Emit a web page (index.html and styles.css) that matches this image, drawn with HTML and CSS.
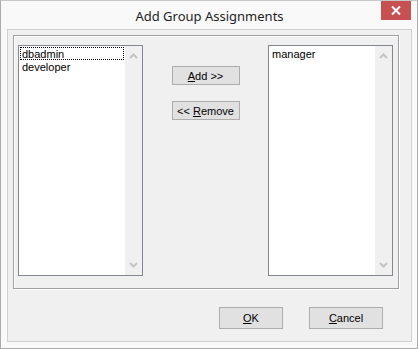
FILE: index.html
```html
<!DOCTYPE html>
<html lang="en">
<head>
<meta charset="UTF-8">
<meta name="viewport" content="width=device-width, initial-scale=1.0">
<title>Add Group Assignments</title>
<link rel="stylesheet" href="styles.css">
</head>
<body>
  <div class="window">
    <div class="titlebar">
      <span class="title">Add Group Assignments</span>
      <span class="close-btn">
        <svg class="close-x" width="30" height="19" viewBox="0 0 30 19">
          <rect width="30" height="19" fill="#c75050"/>
          <path d="M11 5.5 L19 13.5 M19 5.5 L11 13.5" stroke="#ffffff" stroke-width="2"/>
        </svg>
      </span>
    </div>

    <div class="client">
      <div class="group">
        <!-- available groups -->
        <div class="listbox">
          <div class="items">
            <div class="item focus">dbadmin</div>
            <div class="item">developer</div>
          </div>
          <div class="scrollbar">
            <svg width="9" height="6" viewBox="0 0 9 6"><path d="M1 5 L4.5 1.5 L8 5" stroke="#c4c4c4" stroke-width="2" fill="none"/></svg>
            <svg width="9" height="6" viewBox="0 0 9 6"><path d="M1 1 L4.5 4.5 L8 1" stroke="#c4c4c4" stroke-width="2" fill="none"/></svg>
          </div>
        </div>

        <div class="mover">
          <button class="btn small"><u>A</u>dd &gt;&gt;</button>
          <button class="btn small">&lt;&lt; <u>R</u>emove</button>
        </div>

        <!-- assigned groups -->
        <div class="listbox">
          <div class="items">
            <div class="item">manager</div>
          </div>
          <div class="scrollbar">
            <svg width="9" height="6" viewBox="0 0 9 6"><path d="M1 5 L4.5 1.5 L8 5" stroke="#c4c4c4" stroke-width="2" fill="none"/></svg>
            <svg width="9" height="6" viewBox="0 0 9 6"><path d="M1 1 L4.5 4.5 L8 1" stroke="#c4c4c4" stroke-width="2" fill="none"/></svg>
          </div>
        </div>
      </div>

      <div class="actions">
        <button class="btn ok"><u>O</u>K</button>
        <button class="btn cancel"><u>C</u>ancel</button>
      </div>
    </div>
  </div>
</body>
</html>
```

FILE: styles.css
```css
body {
  margin: 0;
  background: #fff;
  font-family: "Liberation Sans", Arial, sans-serif;
}

.window {
  width: 418px;
  height: 349px;
  box-sizing: border-box;
  border: 1px solid #acacac;
  border-top-color: #c8c8c8;
  background: #f9f9f9;
}

.titlebar {
  height: 28px;
  display: flex;
  align-items: flex-start;
}

.title {
  flex: 1;
  text-align: center;
  padding: 6px 0 0 37px;
  font-family: "Noto Sans", sans-serif;
  font-size: 13px;
  line-height: 18px;
  color: #1e1e1e;
}

.close-btn {
  flex: none;
  display: block;
  width: 30px;
  height: 19px;
  margin-right: 6px;
  background: #c75050;
}

.close-x {
  display: block;
}

.client {
  height: 313px;
  box-sizing: border-box;
  margin: 0 5px 0 6px;
  border: 1px solid #d0d0d0;
  background: #f0f0f0;
  padding: 5px 28px 0 5px;
}

.group {
  width: 386px;
  height: 254px;
  box-sizing: border-box;
  border: 1px solid #a0a0a0;
  box-shadow: 1px 1px 0 #fff, inset 1px 1px 0 #fff;
  padding: 9px 0 0 4px;
  display: flex;
  align-items: flex-start;
}

.listbox {
  width: 125px;
  height: 231px;
  box-sizing: border-box;
  border: 1px solid #828790;
  background: #fff;
  display: flex;
}

.items {
  flex: 1;
  padding: 1px 1px 0 1px;
}

.item {
  height: 13px;
  line-height: 12px;
  padding-left: 1px;
  border: 1px dotted transparent;
  box-sizing: border-box;
  font-size: 11px;
  color: #000;
}

.item.focus {
  border-color: #000;
}

.scrollbar {
  width: 17px;
  background: #f0f0f0;
  display: flex;
  flex-direction: column;
  justify-content: space-between;
  align-items: center;
  padding: 7px 0 7px;
  box-sizing: border-box;
}

.mover {
  width: 125px;
  display: flex;
  flex-direction: column;
  align-items: center;
  gap: 16px;
  padding-top: 21px;
}

.btn {
  font-family: "Liberation Sans", Arial, sans-serif;
  font-size: 11px;
  color: #000;
  background: #e1e1e1;
  border: 1px solid #adadad;
  border-radius: 0;
  padding: 0;
  box-sizing: border-box;
}

.btn.small {
  width: 68px;
  height: 19px;
}

.actions {
  display: flex;
  justify-content: flex-end;
  gap: 26px;
  margin-top: 18px;
}

.btn.ok {
  width: 64px;
  height: 22px;
}

.btn.cancel {
  width: 74px;
  height: 22px;
}
```
